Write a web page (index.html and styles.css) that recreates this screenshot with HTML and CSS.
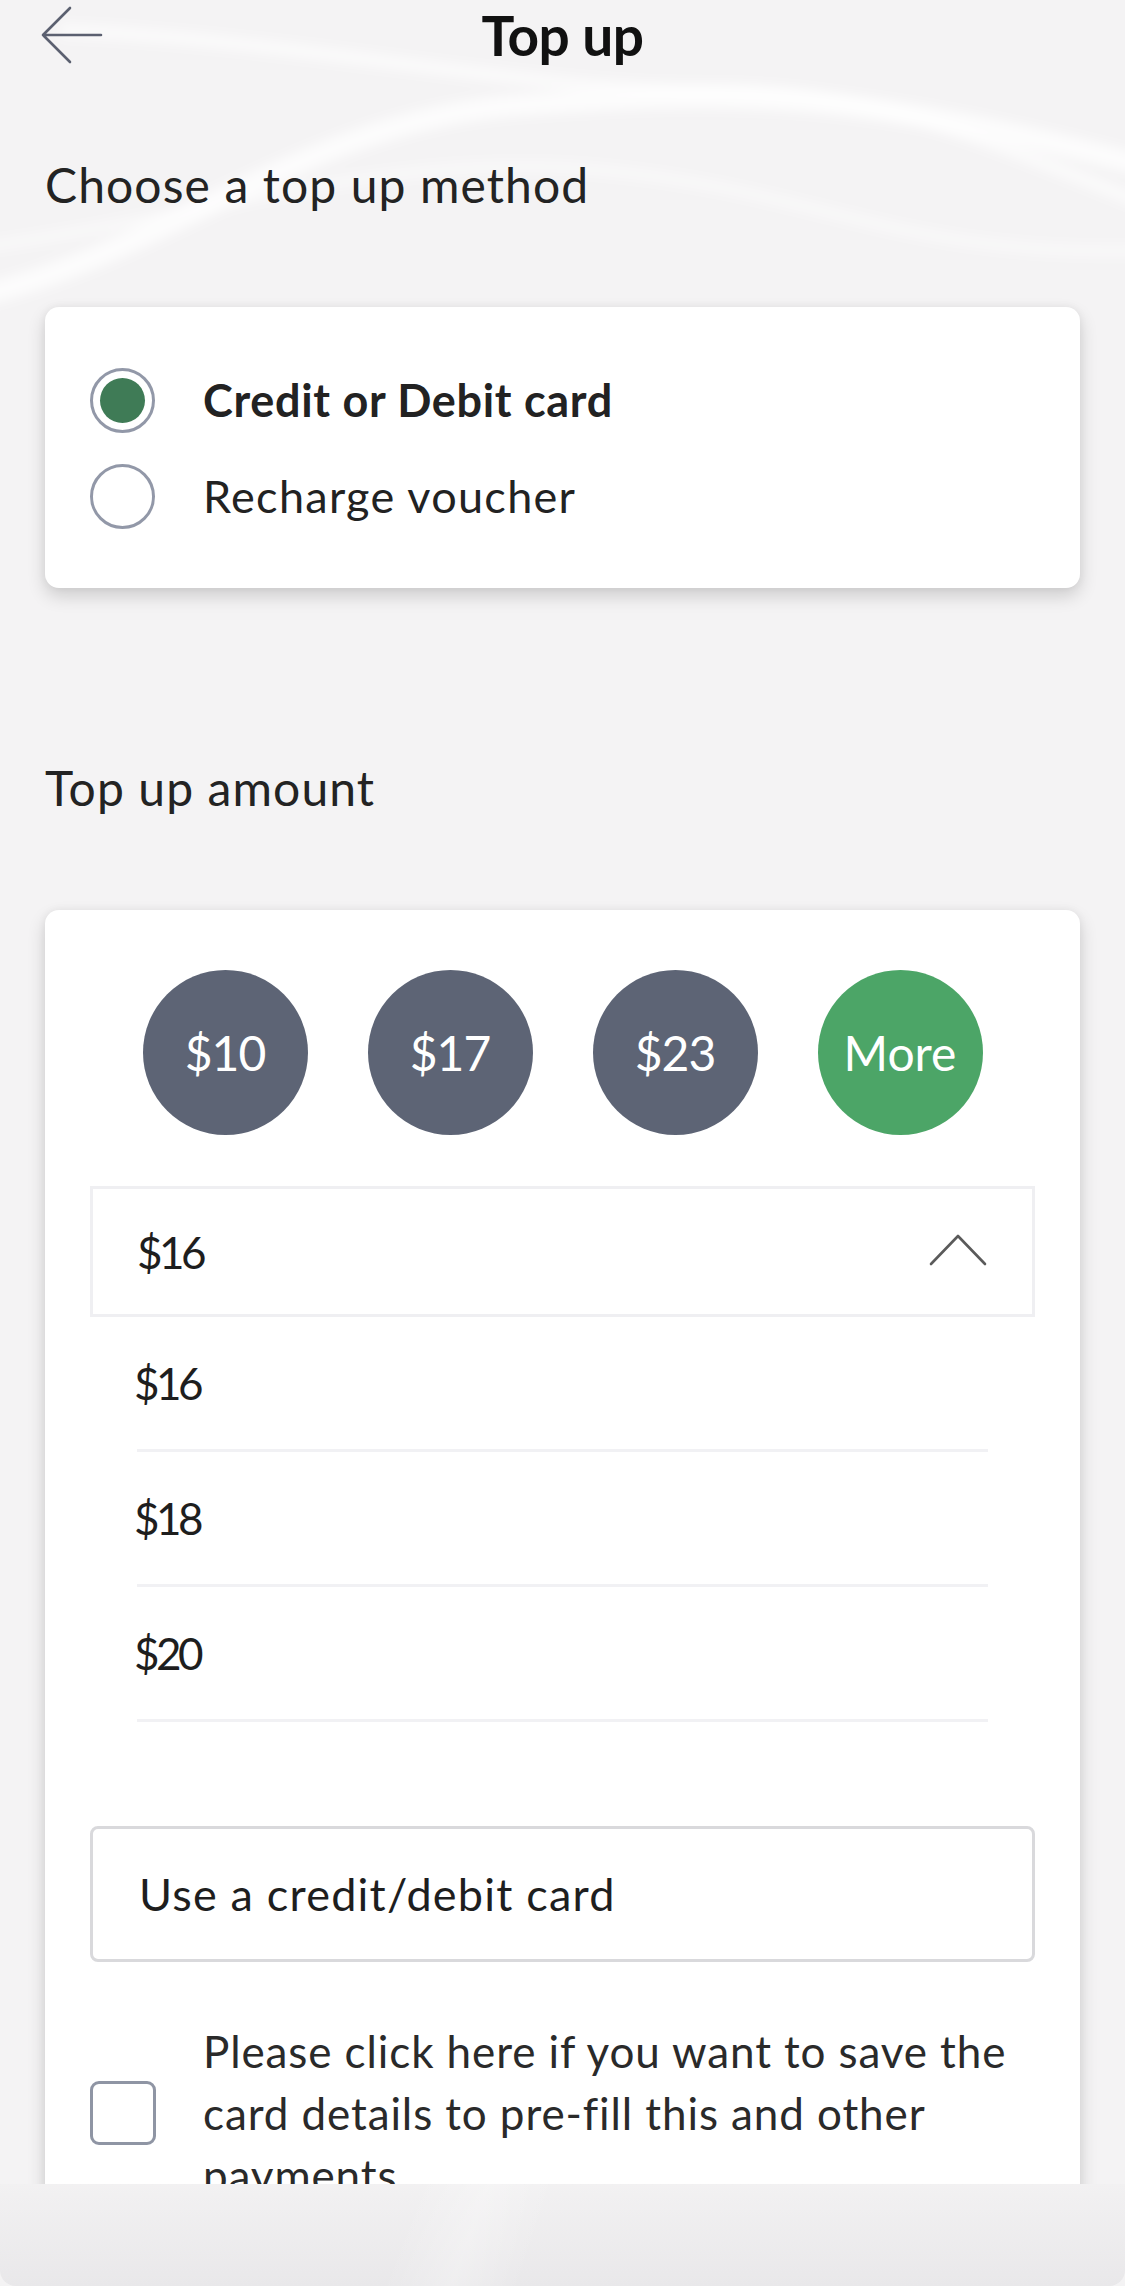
FILE: index.html
```html
<!DOCTYPE html>
<html lang="en">
<head>
<meta charset="utf-8">
<title>Top up</title>
<link rel="stylesheet" href="styles.css">
</head>
<body>
<div class="screen">
  <svg class="bg-waves" width="1125" height="900" viewBox="0 0 1125 900" aria-hidden="true">
    <defs>
      <filter id="soft" x="-20%" y="-50%" width="140%" height="200%"><feGaussianBlur stdDeviation="6"/></filter>
    </defs>
    <g fill="none" stroke="#ffffff" filter="url(#soft)">
      <path d="M-40 300 C 160 260, 300 120, 520 105 S 860 90, 1160 170" stroke-width="22" opacity="0.75"/>
      <path d="M60 30 C 300 40, 520 90, 700 90 S 960 130, 1160 210" stroke-width="14" opacity="0.6"/>
      <path d="M-40 250 C 200 220, 380 150, 600 170 S 900 260, 1160 250" stroke-width="10" opacity="0.5"/>
    </g>
  </svg>

  <header class="topbar">
    <button class="back" type="button" aria-label="Back">
      <svg width="64" height="58" viewBox="0 0 64 58">
        <path d="M30 2 L3 29 L30 56 M3 29 H61" fill="none" stroke="#5b6070" stroke-width="2.6" stroke-linecap="round" stroke-linejoin="round"/>
      </svg>
    </button>
    <h1 class="title">Top up</h1>
    <span class="spacer"></span>
  </header>

  <main class="content">
    <h2 class="section-title">Choose a top up method</h2>
    <section class="card method-card">
      <div class="radio-row">
        <span class="radio is-checked"><span class="radio-dot"></span></span>
        <span class="radio-label is-bold">Credit or Debit card</span>
      </div>
      <div class="radio-row">
        <span class="radio"></span>
        <span class="radio-label">Recharge voucher</span>
      </div>
    </section>

    <h2 class="section-title amount-title">Top up amount</h2>
    <section class="card amount-card">
      <div class="chips">
        <span class="chip">$10</span>
        <span class="chip">$17</span>
        <span class="chip">$23</span>
        <span class="chip is-active">More</span>
      </div>
      <div class="select">
        <span class="select-value">$16</span>
        <svg class="chevron" width="58" height="32" viewBox="0 0 58 32" aria-hidden="true">
          <path d="M2 30 L29 2 L56 30" fill="none" stroke="#5a5a5a" stroke-width="2.6" stroke-linecap="round" stroke-linejoin="round"/>
        </svg>
      </div>
      <ul class="options">
        <li class="option">$16</li>
        <li class="option">$18</li>
        <li class="option">$20</li>
      </ul>
      <div class="card-input">Use a credit/debit card</div>
      <div class="save-row">
        <span class="checkbox"></span>
        <p class="save-text">Please click here if you want to save the<br>card details to pre-fill this and other<br>payments</p>
      </div>
    </section>
  </main>

  <footer class="bottom-bar"></footer>
</div>
</body>
</html>
```

FILE: styles.css
```css
* { box-sizing: border-box; }

html, body {
  margin: 0;
  padding: 0;
}

body {
  font-family: "Lato", "Open Sans", "Liberation Sans", sans-serif;
  color: #222222;
  background: #f4f3f4;
}

.screen {
  position: relative;
  width: 1125px;
  height: 2286px;
  overflow: hidden;
  background: #f4f3f4;
}

.bg-waves {
  position: absolute;
  left: 0;
  top: 0;
  z-index: 0;
}

.topbar {
  position: relative;
  z-index: 1;
  height: 70px;
  display: grid;
  grid-template-columns: 1fr auto 1fr;
  align-items: center;
}

.back {
  justify-self: start;
  margin-left: 40px;
  width: 64px;
  height: 58px;
  padding: 0;
  border: 0;
  background: none;
  display: flex;
}

.title {
  margin: 0;
  font-size: 55px;
  line-height: 70px;
  font-weight: 700;
  color: #111111;
  letter-spacing: -0.5px;
}

.content {
  position: relative;
  z-index: 1;
  padding: 0 45px;
}

.section-title {
  margin: 87px 0 0 0;
  font-size: 48px;
  line-height: 56px;
  font-weight: 400;
  letter-spacing: 1.1px;
  color: #232323;
}

.card {
  background: #ffffff;
  border-radius: 14px;
  box-shadow: 0 8px 18px rgba(0, 0, 0, 0.16), 0 0 8px rgba(0, 0, 0, 0.05);
}

.method-card {
  margin-top: 94px;
  padding: 45px 45px 44px;
}

.radio-row {
  height: 96px;
  display: flex;
  align-items: center;
  gap: 48px;
}

.radio {
  flex: none;
  width: 65px;
  height: 65px;
  border: 3px solid #9298a8;
  border-radius: 50%;
  display: flex;
  align-items: center;
  justify-content: center;
}

.radio-dot {
  width: 45px;
  height: 45px;
  border-radius: 50%;
  background: #3f7b56;
}

.radio-label {
  font-size: 45px;
  letter-spacing: 1.3px;
  color: #222222;
}

.radio-label.is-bold {
  font-weight: 700;
  letter-spacing: 0.7px;
}

.amount-title {
  margin-top: 172px;
}

.amount-card {
  margin-top: 94px;
  padding: 60px 45px 80px;
}

.chips {
  display: flex;
  justify-content: center;
  gap: 60px;
}

.chip {
  width: 165px;
  height: 165px;
  border-radius: 50%;
  background: #5d6475;
  color: #ffffff;
  font-size: 48px;
  display: flex;
  align-items: center;
  justify-content: center;
  letter-spacing: -1px;
}

.chip.is-active {
  background: #4ca567;
  letter-spacing: 0;
}

.select {
  margin-top: 51px;
  height: 131px;
  border: 3px solid #efeff2;
  padding: 0 45px 0 44px;
  display: flex;
  align-items: center;
  justify-content: space-between;
}

.select-value {
  font-size: 44px;
  letter-spacing: -3.5px;
  color: #1e1e1e;
}

.chevron {
  margin-top: -3px;
}

.options {
  list-style: none;
  margin: 0;
  padding: 0 47px;
}

.option {
  height: 135px;
  border-bottom: 3px solid #f1f1f4;
  display: flex;
  align-items: center;
  font-size: 44px;
  letter-spacing: -3.5px;
  text-indent: -3px;
  color: #1e1e1e;
}

.card-input {
  margin-top: 104px;
  height: 136px;
  border: 3px solid #d9d9dc;
  border-radius: 8px;
  padding-left: 46px;
  display: flex;
  align-items: center;
  font-size: 45px;
  letter-spacing: 1.2px;
  color: #1e1e1e;
}

.save-row {
  margin-top: 58px;
  display: flex;
  align-items: center;
  gap: 47px;
}

.checkbox {
  flex: none;
  width: 66px;
  height: 64px;
  border: 3px solid #8f95a4;
  border-radius: 9px;
}

.save-text {
  margin: 0;
  font-size: 44px;
  line-height: 62px;
  letter-spacing: 0.9px;
  color: #2a2a2a;
}

.bottom-bar {
  position: absolute;
  left: 0;
  right: 0;
  bottom: 0;
  z-index: 2;
  height: 102px;
  background:
    linear-gradient(110deg, rgba(255,255,255,0) 36%, rgba(255,255,255,0.28) 42%, rgba(255,255,255,0) 48%),
    linear-gradient(180deg, #f2f1f2 0%, #e9e8ea 100%);
  border-radius: 0 0 16px 16px;
}
```
